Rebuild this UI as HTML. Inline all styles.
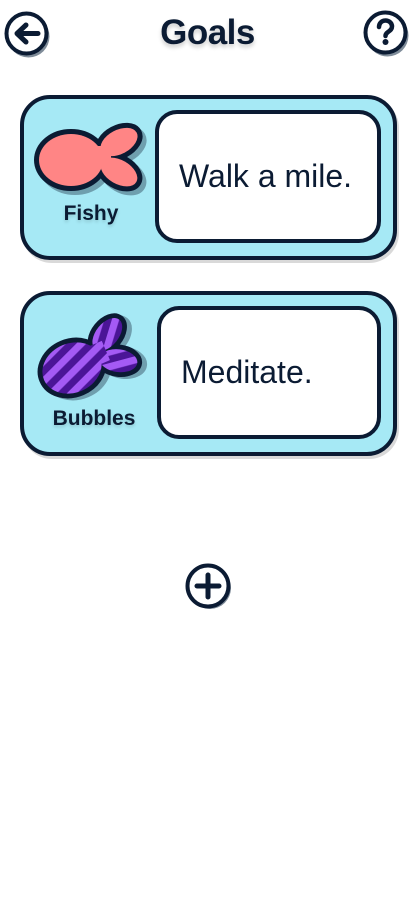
<!DOCTYPE html>
<html><head><meta charset="utf-8"><style>
body{margin:0;width:415px;height:912px;background:#fff;font-family:"Liberation Sans",sans-serif;color:#0b1b33;position:relative;overflow:hidden}
.title{position:absolute;left:0;right:0;top:13px;text-align:center;font-weight:bold;font-size:35px;letter-spacing:-0.5px;text-shadow:0 3px 4px rgba(0,0,0,.2)}
.card{position:absolute;left:20px;width:369px;height:157px;background:#a6e9f5;border:4px solid #0b1b33;border-radius:30px;box-shadow:2px 3px 0 rgba(0,0,0,.15)}
.box{position:absolute;background:#fff;border:4px solid #0b1b33;border-radius:22px;font-size:32px;display:flex;align-items:center;box-sizing:border-box;padding-left:20px}
.name{position:absolute;font-weight:bold;font-size:21px;text-align:center;width:120px;text-shadow:0 2px 3px rgba(0,0,0,.15)}
svg{position:absolute}
</style></head><body>
<svg style="left:3px;top:10px" width="50" height="50" viewBox="0 0 50 50"><circle cx="25.5" cy="26.5" r="21" fill="#7f8c99"/><circle cx="23.5" cy="23.5" r="20" fill="#fff" stroke="#0b1b33" stroke-width="4"/><path d="M35 23.5H15M23 15l-9 8.5 9 8.5" fill="none" stroke="#0b1b33" stroke-width="5" stroke-linecap="round" stroke-linejoin="round"/></svg>
<div class="title">Goals</div>
<svg style="left:362px;top:8px" width="50" height="52" viewBox="0 0 50 52"><circle cx="25.5" cy="27.5" r="21" fill="#7f8c99"/><circle cx="23.5" cy="24.5" r="20" fill="#fff" stroke="#0b1b33" stroke-width="4"/><path d="M17 19c0-4 3-6.5 6.5-6.5S30 15 30 18.5c0 5-6.5 5-6.5 9.5" fill="none" stroke="#0b1b33" stroke-width="4.5" stroke-linecap="round"/><circle cx="23.5" cy="34" r="3" fill="#0b1b33"/></svg>

<div class="card" style="top:95px"></div>
<div class="name" style="left:31px;top:202px">Fishy</div>
<div class="box" style="left:155px;top:110px;width:226px;height:133px">Walk a mile.</div>

<div class="card" style="top:291px"></div>
<div class="name" style="left:34px;top:407px">Bubbles</div>
<div class="box" style="left:157px;top:306px;width:224px;height:133px">Meditate.</div>

<svg style="left:0;top:0" width="415" height="912" viewBox="0 0 415 912">
<defs>
<g id="fish"><ellipse cx="0" cy="0" rx="32" ry="26"/><ellipse cx="0" cy="0" rx="20" ry="12" transform="translate(48,-18) rotate(-28)"/><ellipse cx="0" cy="0" rx="20" ry="12" transform="translate(48,12) rotate(30)"/><rect x="24" y="-14" width="16" height="22"/></g>
<pattern id="st" width="15" height="15" patternUnits="userSpaceOnUse" patternTransform="rotate(68)"><rect width="15" height="15" fill="#4b1597"/><rect width="7.5" height="15" fill="#a45af4"/></pattern>
</defs>
<g transform="translate(71,160)">
<use href="#fish" transform="translate(4,4)" fill="#6f9fae" stroke="#6f9fae" stroke-width="10"/>
<use href="#fish" fill="#0b1b33" stroke="#0b1b33" stroke-width="10"/>
<use href="#fish" fill="#ff8585"/>
</g>
<g transform="translate(72,368) rotate(-23) scale(0.95)">
<use href="#fish" transform="translate(4,4)" fill="#6f9fae" stroke="#6f9fae" stroke-width="10"/>
<use href="#fish" fill="#0b1b33" stroke="#0b1b33" stroke-width="10"/>
<use href="#fish" fill="url(#st)"/>
</g>
</svg>

<svg style="left:183px;top:561px" width="52" height="52" viewBox="0 0 52 52"><circle cx="27" cy="27" r="21" fill="#7f8c99"/><circle cx="25" cy="25" r="20.5" fill="#fff" stroke="#0b1b33" stroke-width="4"/><path d="M25 14v22M14 25h22" stroke="#0b1b33" stroke-width="5" stroke-linecap="round"/></svg>
</body></html>
